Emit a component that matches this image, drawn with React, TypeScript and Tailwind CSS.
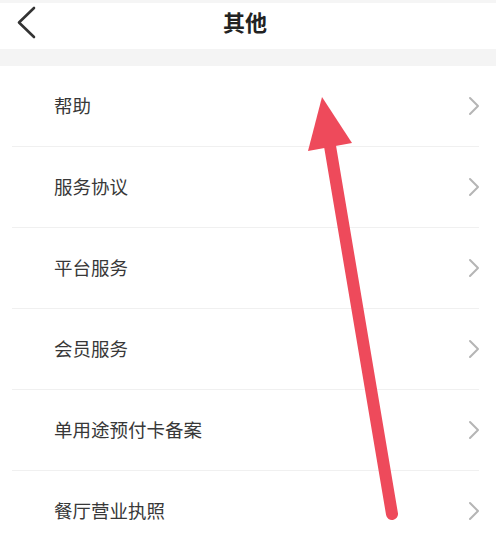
import React from "react";

const items = ["帮助", "服务协议", "平台服务", "会员服务", "单用途预付卡备案", "餐厅营业执照"];

export default function App() {
  return (
    <div
      className="relative w-[496px] h-[544px] overflow-hidden bg-white"
      style={{ fontFamily: '"Noto Sans CJK SC", "Noto Sans", sans-serif' }}
    >
      <div className="h-[3px] bg-[#f5f5f5]" />
      <div className="relative h-[46px] flex items-center justify-center">
        <svg className="absolute left-[15px] top-[2px]" width="24" height="34" viewBox="0 0 24 34">
          <polyline points="19,3 4,17.5 19,32" fill="none" stroke="#333" strokeWidth="2.6" strokeLinecap="round" strokeLinejoin="round" />
        </svg>
        <span className="text-[22px] font-bold text-[#222] -mt-[9px] mr-[6px]">其他</span>
      </div>
      <div className="h-[17px] bg-[#f4f4f4]" />
      <div className="flex flex-col">
        {items.map((t) => (
          <div key={t} className="ml-[12px] w-[467px] h-[81px] shrink-0 flex items-center justify-between border-b border-[#f0f0f0]">
            <span className="pl-[42px] text-[18.5px] text-[#383838]">{t}</span>
            <svg width="12" height="20" viewBox="0 0 12 20" className="mr-[-1px]">
              <polyline points="2,2 10,10 2,18" fill="none" stroke="#b5b5b5" strokeWidth="2" strokeLinecap="round" strokeLinejoin="round" />
            </svg>
          </div>
        ))}
      </div>
      <svg className="absolute left-0 top-0 pointer-events-none" width="496" height="544" viewBox="0 0 496 544">
        <line x1="392" y1="514" x2="330" y2="146" stroke="#ee4a5b" strokeWidth="12" strokeLinecap="round" />
        <polygon points="322,97 308,151 352,143" fill="#ee4a5b" />
      </svg>
    </div>
  );
}
